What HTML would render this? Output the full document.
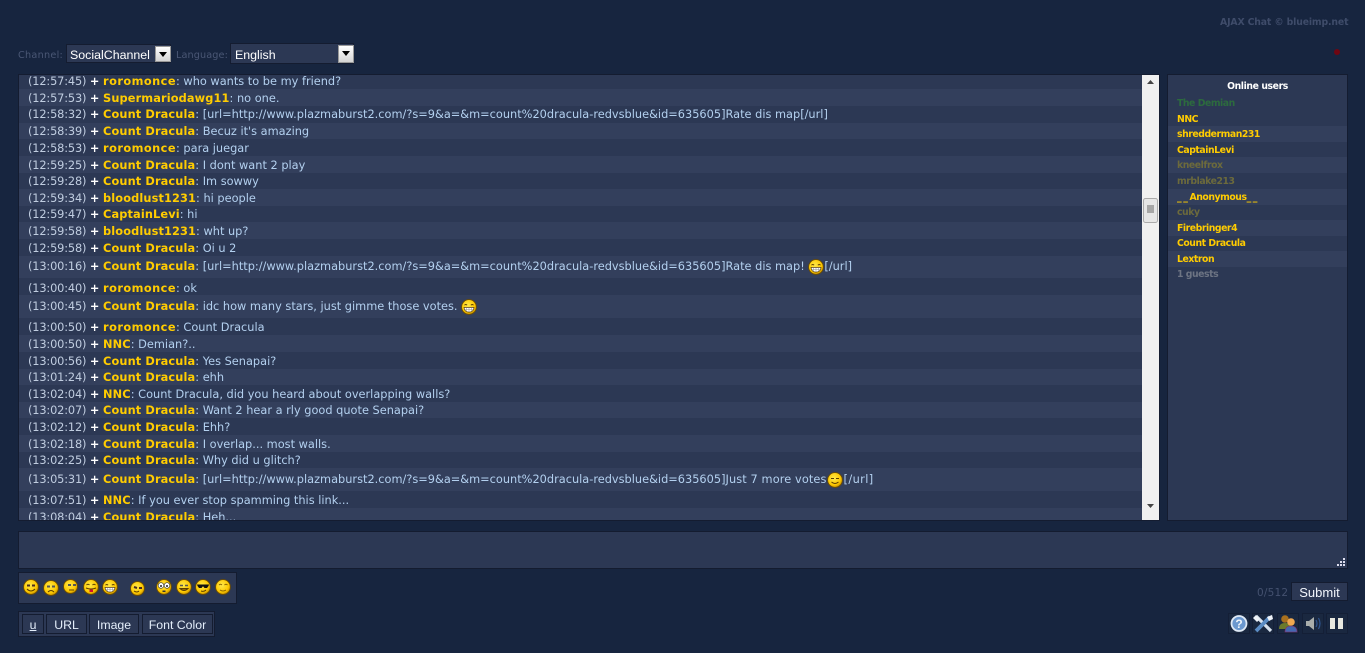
<!DOCTYPE html>
<html><head><meta charset="utf-8"><title>Chat</title>
<style>
html,body{margin:0;padding:0;width:1365px;height:653px;overflow:hidden;background:#17253f}
*{box-sizing:border-box}
body{position:relative;font-family:"DejaVu Sans",sans-serif}
.a{position:absolute}
#log{left:18px;top:74px;width:1142px;height:447px;background:#2c3854;border:1px solid #141c30;overflow:hidden}
.r{position:absolute;left:0;width:1124px;white-space:nowrap;font-size:11.35px;color:#b3d0ef;padding-left:9px}
.r.l{background:#333f5c}.r.d{background:#2c3854}
.r i{font-style:normal;color:#c0cde0;letter-spacing:-.15px}
.r b{color:#fff}.r b.n{color:#fc0;letter-spacing:.12px}
.r b.n.w{letter-spacing:.45px}
.r svg{vertical-align:-5px}
#sb{left:1142px;top:75px;width:17px;height:445px;background:#f0f0f0}
#ul{left:1167px;top:74px;width:181px;height:447px;background:#2c3854;border:1px solid #141c30;overflow:hidden}
.u{position:absolute;left:0;width:179px;height:15.6px;line-height:17px;padding-left:9px;font-size:9.3px;letter-spacing:-.45px;font-weight:bold;color:#fc0;white-space:nowrap}
.u.l{background:#333f5c}
.p{background:#2c3854;border:1px solid #141c30}
.b{position:absolute;top:2px;height:20px;background:#2c3854;border:1px solid #141c30;font:12.3px/21px "Liberation Sans",sans-serif;color:#e4eefa;text-align:center}
.lab{font-size:9.7px;color:#4a5775;letter-spacing:.25px}
.sel{background:#2c3854;border:1px solid #141c30;color:#fff;font:12.4px "Liberation Sans",sans-serif;white-space:nowrap}
.ar{position:absolute;width:16px;background:linear-gradient(#fff,#d4d4d4);border:1px solid #999}
.ar:after{content:"";position:absolute;left:3px;top:5px;border:4px solid transparent;border-top:5px solid #000;border-bottom:0}
.ic{position:absolute;top:613px;width:22px;height:21px;background:#1a2840;border:1px solid #141f36}
.s{position:absolute;top:577px}
</style></head><body>
<svg width="0" height="0" style="position:absolute"><defs>
<radialGradient id="g" cx=".42" cy=".38" r=".7"><stop offset="0" stop-color="#ffe94a"/><stop offset=".65" stop-color="#fdc800"/><stop offset="1" stop-color="#b27a00"/></radialGradient>
<symbol id="f" viewBox="0 0 16 16"><circle cx="8" cy="8" r="7.4" fill="url(#g)" stroke="#6e4d00" stroke-width=".9"/></symbol>
<symbol id="grin" viewBox="0 0 16 16"><circle cx="8" cy="8" r="7.4" fill="url(#g)" stroke="#6e4d00" stroke-width=".9"/><path d="M3.5 6.2q1.3-1.5 2.6 0M9.9 6.2q1.3-1.5 2.6 0" fill="none" stroke="#5a3c00" stroke-width="1"/><path d="M3 8.4h10q-.3 4.7-5 4.7T3 8.4z" fill="#fff" stroke="#5a3c00" stroke-width=".7"/><path d="M5.5 8.5v4M8 8.5v4.5M10.5 8.5v4M3.5 10.3h9" stroke="#8a8a8a" stroke-width=".5"/></symbol>
</defs></svg>

<div class="a" style="left:1220px;top:17px;font-size:9.3px;letter-spacing:-.13px;font-weight:bold;color:#3f4c6a;white-space:nowrap">AJAX Chat © blueimp.net</div>
<div class="a" style="left:1334px;top:49px;width:6px;height:6px;border-radius:50%;background:#6f0612"></div>

<div class="a lab" style="left:18px;top:50px">Channel:</div>
<div class="a sel" style="left:66px;top:44px;width:105px;height:19px;line-height:20px;padding-left:3px">SocialChannel<div class="ar" style="left:88px;top:1px;height:16px"></div></div>
<div class="a lab" style="left:176px;top:50px;letter-spacing:.1px">Language:</div>
<div class="a sel" style="left:230px;top:43px;width:124px;height:21px;line-height:22px;padding-left:4px">English<div class="ar" style="left:107px;top:1px;height:18px"></div></div>

<div class="a" id="log">
<div class="r d" style="top:-2px;height:16px;line-height:16px"><i>(12:57:45)</i> <b>+</b> <b class="n w">roromonce</b>: who wants to be my friend?</div>
<div class="r l" style="top:14px;height:17px;line-height:19px"><i>(12:57:53)</i> <b>+</b> <b class="n">Supermariodawg11</b>: no one.</div>
<div class="r d" style="top:31px;height:17px;line-height:17px"><i>(12:58:32)</i> <b>+</b> <b class="n">Count Dracula</b>: [url=http://www.plazmaburst2.com/?s=9&amp;a=&amp;m=count%20dracula-redvsblue&amp;id=635605]Rate dis map[/url]</div>
<div class="r l" style="top:48px;height:16px;line-height:16px"><i>(12:58:39)</i> <b>+</b> <b class="n">Count Dracula</b>: Becuz it's amazing</div>
<div class="r d" style="top:64px;height:17px;line-height:19px"><i>(12:58:53)</i> <b>+</b> <b class="n w">roromonce</b>: para juegar</div>
<div class="r l" style="top:81px;height:17px;line-height:19px"><i>(12:59:25)</i> <b>+</b> <b class="n">Count Dracula</b>: I dont want 2 play</div>
<div class="r d" style="top:98px;height:16px;line-height:16px"><i>(12:59:28)</i> <b>+</b> <b class="n">Count Dracula</b>: Im sowwy</div>
<div class="r l" style="top:114px;height:17px;line-height:19px"><i>(12:59:34)</i> <b>+</b> <b class="n">bloodlust1231</b>: hi people</div>
<div class="r d" style="top:131px;height:16px;line-height:16px"><i>(12:59:47)</i> <b>+</b> <b class="n">CaptainLevi</b>: hi</div>
<div class="r l" style="top:147px;height:17px;line-height:19px"><i>(12:59:58)</i> <b>+</b> <b class="n">bloodlust1231</b>: wht up?</div>
<div class="r d" style="top:164px;height:17px;line-height:19px"><i>(12:59:58)</i> <b>+</b> <b class="n">Count Dracula</b>: Oi u 2</div>
<div class="r l" style="top:181px;height:22px;line-height:21px"><i>(13:00:16)</i> <b>+</b> <b class="n">Count Dracula</b>: [url=http://www.plazmaburst2.com/?s=9&amp;a=&amp;m=count%20dracula-redvsblue&amp;id=635605]Rate dis map! <svg width="16" height="16"><use href="#grin"/></svg>[/url]</div>
<div class="r d" style="top:203px;height:17px;line-height:21px"><i>(13:00:40)</i> <b>+</b> <b class="n w">roromonce</b>: ok</div>
<div class="r l" style="top:220px;height:23px;line-height:23px"><i>(13:00:45)</i> <b>+</b> <b class="n">Count Dracula</b>: idc how many stars, just gimme those votes. <svg width="16" height="16"><use href="#grin"/></svg></div>
<div class="r d" style="top:243px;height:17px;line-height:19px"><i>(13:00:50)</i> <b>+</b> <b class="n w">roromonce</b>: Count Dracula</div>
<div class="r l" style="top:260px;height:17px;line-height:19px"><i>(13:00:50)</i> <b>+</b> <b class="n">NNC</b>: Demian?..</div>
<div class="r d" style="top:277px;height:17px;line-height:19px"><i>(13:00:56)</i> <b>+</b> <b class="n">Count Dracula</b>: Yes Senapai?</div>
<div class="r l" style="top:294px;height:16px;line-height:16px"><i>(13:01:24)</i> <b>+</b> <b class="n">Count Dracula</b>: ehh</div>
<div class="r d" style="top:310px;height:17px;line-height:19px"><i>(13:02:04)</i> <b>+</b> <b class="n">NNC</b>: Count Dracula, did you heard about overlapping walls?</div>
<div class="r l" style="top:327px;height:16px;line-height:16px"><i>(13:02:07)</i> <b>+</b> <b class="n">Count Dracula</b>: Want 2 hear a rly good quote Senapai?</div>
<div class="r d" style="top:343px;height:17px;line-height:19px"><i>(13:02:12)</i> <b>+</b> <b class="n">Count Dracula</b>: Ehh?</div>
<div class="r l" style="top:360px;height:17px;line-height:19px"><i>(13:02:18)</i> <b>+</b> <b class="n">Count Dracula</b>: I overlap... most walls.</div>
<div class="r d" style="top:377px;height:16px;line-height:16px"><i>(13:02:25)</i> <b>+</b> <b class="n">Count Dracula</b>: Why did u glitch?</div>
<div class="r l" style="top:393px;height:23px;line-height:23px"><i>(13:05:31)</i> <b>+</b> <b class="n">Count Dracula</b>: [url=http://www.plazmaburst2.com/?s=9&amp;a=&amp;m=count%20dracula-redvsblue&amp;id=635605]<span style="letter-spacing:.1px">Just 7 more votes</span><svg width="16" height="16" style="margin-right:1px"><use href="#f"/><path d="M4 6.500h3M9 6.500h3M4.500 10q3.500 3 7 0" fill="none" stroke="#5a3c00"/></svg><span style="letter-spacing:.4px">[/url]</span></div>
<div class="r d" style="top:416px;height:17px;line-height:19px"><i>(13:07:51)</i> <b>+</b> <b class="n">NNC</b>: If you ever stop spamming this link...</div>
<div class="r l" style="top:433px;height:17px;line-height:19px"><i>(13:08:04)</i> <b>+</b> <b class="n">Count Dracula</b>: Heh...</div>
</div>

<div class="a" id="sb">
<svg class="a" style="left:0;top:0" width="17" height="445">
<path d="M5 9l3.500-4 3.500 4z" fill="#444"/><path d="M5 429h7l-3.500 4z" fill="#444"/>
<rect x="1.500" y="123.500" width="14" height="24" rx="2" fill="#e6e6e6" stroke="#aaa"/>
<path d="M5 131h7M5 133h7M5 135h7M5 137h7" stroke="#666"/>
</svg>
</div>

<div class="a" id="ul">
<div style="position:absolute;left:0;width:179px;top:6px;text-align:center;font-size:9.3px;letter-spacing:-.4px;font-weight:bold;color:#fff">Online users</div>
<div class="u" style="top:20px;color:#2c6b3e">The Demian</div>
<div class="u" style="top:36px">NNC</div>
<div class="u l" style="top:51px">shredderman231</div>
<div class="u" style="top:67px">CaptainLevi</div>
<div class="u l" style="top:82px;color:#6c6a3c">kneelfrox</div>
<div class="u" style="top:98px;color:#6c6a3c">mrblake213</div>
<div class="u l" style="top:114px"><span style="letter-spacing:1.6px">__</span>Anonymous<span style="letter-spacing:1.6px">__</span></div>
<div class="u" style="top:129px;color:#6c6a3c">cuky</div>
<div class="u l" style="top:145px">Firebringer4</div>
<div class="u" style="top:160px">Count Dracula</div>
<div class="u l" style="top:176px">Lextron</div>
<div class="u" style="top:191px;color:#6d7483">1 guests</div>
</div>

<div class="a p" style="left:18px;top:531px;width:1330px;height:38px">
<svg class="a" style="right:2px;bottom:2px" width="9" height="8" fill="#dde"><rect x="7" y="0" width="2" height="2"/><rect x="4" y="3" width="2" height="2"/><rect x="7" y="3" width="2" height="2"/><rect x="1" y="6" width="2" height="2"/><rect x="4" y="6" width="2" height="2"/><rect x="7" y="6" width="2" height="2"/></svg>
</div>

<div class="a p" style="left:18px;top:572px;width:219px;height:32px"></div>
<svg class="s" style="left:23px;top:579px" width="16" height="16"><use href="#f"/><path d="M4 6.500h3M9 6.500h3" stroke="#4a2c20" stroke-width="2"/><path d="M4 10q4 4 8 0" fill="none" stroke="#5a3c00"/></svg>
<svg class="s" style="left:43px;top:580px" width="16" height="16"><use href="#f"/><path d="M4 6.500h3M9 6.500h3" stroke="#555" stroke-width="2"/><path d="M5 12q3-3 6 0" fill="none" stroke="#5a3c00"/></svg>
<svg class="s" style="left:63px;top:579px" width="15" height="15"><use href="#f"/><path d="M5 6h3M10 6h3" stroke="#555" stroke-width="2"/><path d="M6 11h5" fill="none" stroke="#5a3c00"/></svg>
<svg class="s" style="left:83px;top:579px" width="16" height="16"><use href="#f"/><path d="M3.500 6q1.500-1.500 3 0M9.500 6q1.500-1.500 3 0M3 9q5 2 10 0" fill="none" stroke="#5a3c00"/><path d="M6.500 10.500h3.500v2.500h-3.500z" fill="#d01030"/></svg>
<svg class="s" style="left:102px;top:579px" width="16" height="16"><use href="#grin"/></svg>
<svg class="s" style="left:130px;top:581px" width="15" height="15"><use href="#f"/><path d="M4 6l3 1M9 7h3" stroke="#4a2c20" stroke-width="2"/><path d="M4 10q3 2 5 0" fill="none" stroke="#5a3c00"/></svg>
<svg class="s" style="left:156px;top:579px" width="16" height="16"><use href="#f"/><circle cx="5" cy="6.500" r="2.800" fill="#fff" stroke="#333" stroke-width=".6"/><circle cx="11" cy="6.500" r="2.800" fill="#fff" stroke="#333" stroke-width=".6"/><circle cx="5" cy="7" r="1" fill="#222"/><circle cx="11" cy="7" r="1" fill="#222"/><rect x="6.500" y="11.500" width="3" height="1.500" fill="#333"/></svg>
<svg class="s" style="left:176px;top:579px" width="16" height="16"><use href="#f"/><path d="M4 6.500h3M9 6.500h3" stroke="#555" stroke-width="1.600"/><path d="M4 9.500q4 4 8 0z" fill="#a87a00" stroke="#5a3c00"/></svg>
<svg class="s" style="left:195px;top:579px" width="16" height="16"><use href="#f"/><path d="M2 5.500h12l-.5 1.500-1.500 2h-2.500L8 7.300 6.500 9H4L2.500 7z" fill="#111"/><path d="M6 12q3 1 5-1" fill="none" stroke="#5a3c00"/></svg>
<svg class="s" style="left:215px;top:579px" width="16" height="16"><use href="#f"/><path d="M4 6q1.500-1.500 3 0M9.500 6q1.500-1.500 3 0M5 11q3 2 6 0" fill="none" stroke="#8a6200"/></svg>

<div class="a p" style="left:18px;top:611px;width:197px;height:26px">
<div class="b" style="left:3px;width:22px;text-decoration:underline">u</div>
<div class="b" style="left:27px;width:41px">URL</div>
<div class="b" style="left:70px;width:50px">Image</div>
<div class="b" style="left:123px;width:71px">Font Color</div>
</div>

<div class="a" style="left:1257px;top:587px;font-size:10.5px;color:#44516f;letter-spacing:.2px">0/512</div>
<div class="a" style="left:1291px;top:582px;width:57px;height:19px;background:#2c3854;border:1px solid #141c30;font:13px/20px 'Liberation Sans',sans-serif;color:#f2f6fc;text-align:center">Submit</div>

<div class="ic" style="left:1228px"><svg width="20" height="19"><circle cx="10" cy="9.500" r="7.500" fill="#6b98cf" stroke="#dfe9f5" stroke-width="1.800"/><text x="10" y="14" font-family="Liberation Sans" font-weight="bold" font-size="12" fill="#eef4fb" text-anchor="middle">?</text></svg></div>
<div class="ic" style="left:1252px"><svg width="20" height="19"><path d="M3 2l15 15" stroke="#d8e2ee" stroke-width="3.200"/><path d="M17 3L3 17" stroke="#5b8cc4" stroke-width="3.800"/><path d="M0 4l3-3 4 4-3 3zM19 1l-5 2 2 4 4-2z" fill="#eef2f8"/></svg></div>
<div class="ic" style="left:1277px"><svg width="20" height="19"><circle cx="7" cy="5" r="3.800" fill="#a8701e"/><path d="M1 15q0-6 6-6t6 6z" fill="#6b7a2c"/><circle cx="13" cy="8" r="3.800" fill="#f0a850"/><path d="M7 18q0-6 6-6t6 6z" fill="#4468b0" stroke="#8a2a6a" stroke-width=".6"/></svg></div>
<div class="ic" style="left:1302px"><svg width="20" height="19"><path d="M3 7h3l5-4v13l-5-4H3z" fill="#a9adab"/><path d="M13 6q2 3.500 0 7M15.500 4q3 5.500 0 11" fill="none" stroke="#2f5590" stroke-width="1.200"/></svg></div>
<div class="ic" style="left:1326px"><svg width="20" height="19"><rect x="3" y="4" width="5" height="11" fill="#e8e8e0"/><rect x="11" y="4" width="5" height="11" fill="#e8e8e0"/></svg></div>
</body></html>
